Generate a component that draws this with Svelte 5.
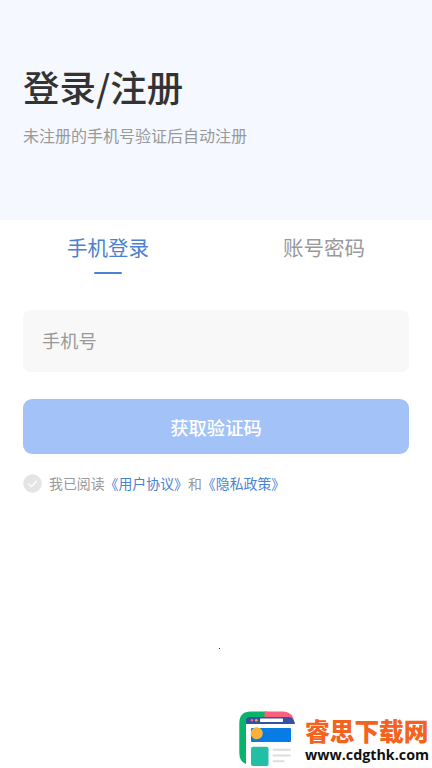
<script lang="ts">
  const tabs = ['手机登录', '账号密码']

  let active = $state(0)
  let agreed = $state(false)
</script>

<main class="page">
  <header class="hero">
    <h1>登录/注册</h1>
    <p>未注册的手机号验证后自动注册</p>
  </header>

  <nav class="tabs">
    {#each tabs as tab, i}
      <button class="tab" class:active={active === i} onclick={() => (active = i)}>{tab}</button>
    {/each}
  </nav>

  <section class="form">
    <input class="phone" type="tel" placeholder="手机号" />
    <button class="submit">获取验证码</button>

    <div class="agreement">
      <button class="check" class:agreed aria-label="同意" onclick={() => (agreed = !agreed)}>
        <svg viewBox="0 0 19 19">
          <circle cx="9.5" cy="9.5" r="9.3" fill="currentColor" />
          <path d="M5.5 9.8l2.9 2.8 5.5-5.8" fill="none" stroke="#fff" stroke-width="1.3" />
        </svg>
      </button>
      <span class="terms">我已阅读<a href="#terms">《用户协议》</a>和<a href="#privacy">《隐私政策》</a></span>
    </div>
  </section>

  <i class="dot"></i>

  <footer class="brand">
    <svg class="logo" viewBox="0 0 58 56">
      <path d="M12 0.5H28L26 8H12V54.5Q0.3 53 0.3 42V12Q0.3 0.5 12 0.5Z" fill="#08b36b" />
      <path d="M25.5 0.5H45Q54 1 55.5 12H25.5Z" fill="#fa5f7e" />
      <path d="M7 13V10Q7 6 11 6H50Q54.5 6 56 13Z" fill="#3551a4" />
      <rect x="21" y="7.5" width="23" height="3.5" rx="0.7" fill="#fff" />
      <circle cx="13" cy="9.3" r="1.3" fill="#fa5f7e" />
      <circle cx="17.3" cy="9.3" r="1.3" fill="#f9b233" />
      <path d="M7 13H56V55H7Z" fill="#fff" />
      <rect x="12" y="17" width="40" height="14" rx="1" fill="#087ce5" />
      <circle cx="17.8" cy="22.3" r="6" fill="#f9b233" />
      <rect x="12" y="35.7" width="17.5" height="19.3" rx="2" fill="#22bfa5" />
      <path d="M34.5 38.7H51M34.5 44.6H51M34.5 50.3H44.5" fill="none" stroke="#dcdde0" stroke-width="2" stroke-linecap="round" />
    </svg>
    <div class="brand-text">
      <strong>睿思下载网</strong>
      <span>www.cdgthk.com</span>
    </div>
  </footer>
</main>

<style>
  :global(body) {
    background: #fff;
  }

  .page {
    position: relative;
    height: 768px;
    overflow: hidden;
    font-family: 'Liberation Sans', 'Noto Sans CJK SC', sans-serif;
    color: #999;
  }
  button,
  input {
    padding: 0;
    border: 0;
    background: none;
    font: inherit;
    color: inherit;
  }

  .hero {
    box-sizing: border-box;
    height: 220px;
    padding: 61px 23px 0;
    background: #f5f8ff;
  }
  h1 {
    margin: 0;
    font-family: 'Noto Sans CJK SC', sans-serif;
    font-size: 36.5px;
    font-weight: 500;
    line-height: 52px;
    color: #333;
  }
  .hero p {
    margin: 12px 0 0;
    font-size: 16px;
    line-height: 24px;
  }

  .tabs {
    display: flex;
  }
  .tab {
    position: relative;
    flex: 1;
    height: 56px;
    padding-bottom: 2px;
    font-size: 20.5px;
  }
  .tab.active {
    color: #4a82d0;
  }
  .tab.active::after {
    content: '';
    position: absolute;
    bottom: 2px;
    left: 50%;
    width: 28px;
    height: 2px;
    border-radius: 1px;
    background: #4a82d0;
    transform: translateX(-50%);
  }

  .form {
    display: flex;
    flex-direction: column;
    padding: 34px 23px 0;
  }
  .phone {
    box-sizing: border-box;
    height: 62px;
    padding: 3px 19px 0;
    border-radius: 8px;
    background: #f8f8f8;
    font-size: 18.2px;
  }
  .phone::placeholder {
    color: #999;
  }
  .submit {
    height: 55px;
    margin-top: 27px;
    border-radius: 9px;
    background: #a3c3f8;
    font-family: 'Noto Sans CJK SC', sans-serif;
    font-size: 18.3px;
    font-weight: 500;
    color: #fff;
  }
  .agreement {
    display: flex;
    align-items: center;
    gap: 7px;
    margin-top: 17px;
  }
  .check {
    width: 19px;
    height: 19px;
    color: #e4e4e4;
  }
  .check.agreed {
    color: #4a82d0;
  }
  .check svg {
    display: block;
  }
  .terms {
    padding-top: 2px;
    font-size: 13.9px;
    line-height: 22px;
    white-space: nowrap;
  }
  .terms a {
    color: #4a82d0;
    text-decoration: none;
  }

  .dot {
    position: absolute;
    top: 648px;
    left: 219px;
    width: 1px;
    height: 1px;
    background: #333;
  }

  .brand {
    position: absolute;
    right: 0;
    bottom: 0;
    display: flex;
    gap: 8px;
    width: 193px;
    height: 57px;
  }
  .logo {
    flex: none;
    width: 58px;
    height: 56px;
  }
  .brand-text {
    display: flex;
    flex-direction: column;
    padding-top: 5px;
    white-space: nowrap;
  }
  .brand-text strong {
    font-family: 'Noto Sans CJK SC', sans-serif;
    font-size: 24.7px;
    font-weight: 900;
    line-height: 29px;
    color: #f4631e;
  }
  .brand-text span {
    font-family: 'Open Sans', sans-serif;
    font-size: 14.3px;
    font-weight: 700;
    line-height: 20px;
    color: #111;
  }
</style>
